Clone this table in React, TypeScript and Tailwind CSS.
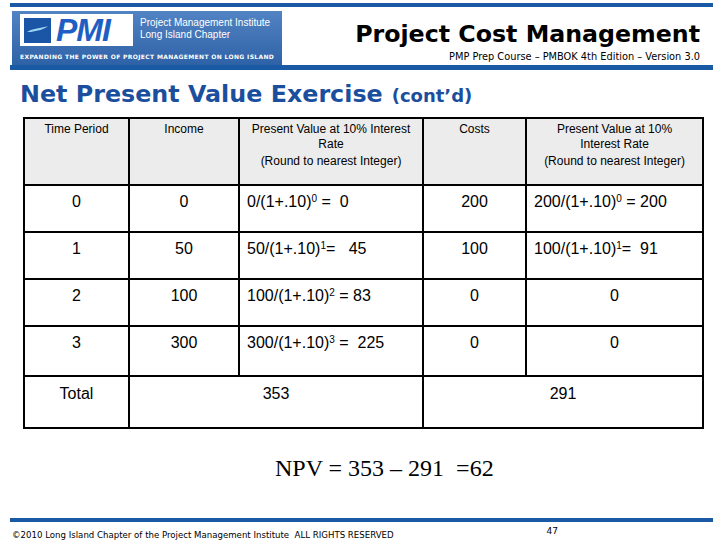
import React from 'react'

const headerCells = [
  { w: 'w-[105px]', lines: ['Time Period'] },
  { w: 'w-[110px]', lines: ['Income'] },
  { w: 'w-[184px]', lines: ['Present Value at 10% Interest', 'Rate', '(Round to nearest Integer)'] },
  { w: 'w-[103px]', lines: ['Costs'] },
  { w: 'w-[177px]', lines: ['Present Value at 10%', 'Interest Rate', '(Round to nearest Integer)'] },
]

function Pow({ base, exp, rest }: { base: string; exp: string; rest: string }) {
  return (
    <span className="whitespace-pre">
      {base}
      <sup className="text-[10px]">{exp}</sup>
      {rest}
    </span>
  )
}

const rows = [
  { t: '0', inc: '0', pv: <Pow base="0/(1+.10)" exp="0" rest=" =  0" />, cost: '200', pvc: <Pow base="200/(1+.10)" exp="0" rest=" = 200" />, h: 'h-[47px]' },
  { t: '1', inc: '50', pv: <Pow base="50/(1+.10)" exp="1" rest="=   45" />, cost: '100', pvc: <Pow base="100/(1+.10)" exp="1" rest="=  91" />, h: 'h-[47px]' },
  { t: '2', inc: '100', pv: <Pow base="100/(1+.10)" exp="2" rest=" = 83" />, cost: '0', pvc: '0', h: 'h-[47px]' },
  { t: '3', inc: '300', pv: <Pow base="300/(1+.10)" exp="3" rest=" =  225" />, cost: '0', pvc: '0', h: 'h-[50px]' },
]

function Logo() {
  return (
    <div className="flex h-[54px] w-[270px] flex-col overflow-hidden bg-gradient-to-b from-[#5283c3] to-[#2e62a7] pl-[8px] pt-[3px]">
      <div className="flex items-start gap-[7px]">
        <div className="flex h-[32px] w-[113px] shrink-0 items-center gap-[5px] bg-white px-[4px]">
          <div className="flex h-[25px] w-[27px] shrink-0 items-center justify-center bg-[#1b55a6]">
            <svg width="23" height="10" viewBox="0 0 24 10">
              <path d="M1 7 L5 5 L9 4 L14 3 L18 2 L23 1 L20 3 L15 5 L10 6 L5 7 Z" fill="#9fd6f0" />
            </svg>
          </div>
          <span className="text-[32px] font-black italic leading-none tracking-[-1px] text-[#1f5fc4] [font-family:'Liberation_Sans',Arial,sans-serif]">
            PMI
          </span>
        </div>
        <div className="whitespace-nowrap pt-[3px] text-[10px] leading-[12px] text-white [font-family:'Liberation_Sans',Arial,sans-serif]">
          <div>Project Management Institute</div>
          <div>Long Island Chapter</div>
        </div>
      </div>
      <div className="mt-[7px] whitespace-nowrap text-[6px] font-bold uppercase leading-[8px] tracking-[0.35px] text-white [font-family:'DejaVu_Sans',sans-serif]">
        Expanding the Power of Project Management on Long Island
      </div>
    </div>
  )
}

export default function App() {
  return (
    <div className="flex h-[540px] w-[720px] flex-col overflow-hidden bg-white [font-family:'Liberation_Sans',Arial,sans-serif]">
      <div className="ml-[10px] mt-[3px] h-[5px] w-[703px] bg-[#1a5aa5]" />
      <div className="ml-[10px] flex h-[61px] w-[703px] items-start justify-between">
        <div className="ml-[2px] mt-[4px]">
          <Logo />
        </div>
        <div className="mr-[13px] mt-[12px] flex flex-col items-end">
          <h1 className="text-[23.7px] font-bold leading-[30px] text-black [font-family:'DejaVu_Sans',sans-serif]">
            Project Cost Management
          </h1>
          <p className="mt-[3px] whitespace-nowrap text-[9.8px] leading-[10px] text-black [font-family:'DejaVu_Sans',sans-serif]">
            PMP Prep Course – PMBOK 4th Edition – Version 3.0
          </p>
        </div>
      </div>
      <div className="ml-[10px] h-[5px] w-[703px] bg-[#1a5aa5]" />

      <div className="ml-[20px] mt-[10px] flex items-baseline gap-[9px] text-[#1b4f9e] [font-family:'DejaVu_Sans',sans-serif]">
        <span className="text-[23.8px] font-bold leading-[28px]">Net Present Value Exercise</span>
        <span className="text-[18px] font-bold">(cont’d)</span>
      </div>

      <table className="ml-[23px] mt-[8px] w-[681px] border-collapse border-2 border-black text-black">
        <thead>
          <tr className="h-[67px] bg-[#ececec]">
            {headerCells.map((c, i) => (
              <th key={i} className={`${c.w} border-2 border-black px-[4px] pt-[3px] align-top text-[12px] font-normal leading-[15px]`}>
                {c.lines.map((l, j) => (
                  <div key={j} className={j === 2 ? 'mt-[2px]' : ''}>
                    {l}
                  </div>
                ))}
              </th>
            ))}
          </tr>
        </thead>
        <tbody className="text-[16px]">
          {rows.map((r) => (
            <tr key={r.t} className={r.h}>
              <td className="border-2 border-black pt-[4px] text-center align-top">{r.t}</td>
              <td className="border-2 border-black pt-[4px] text-center align-top">{r.inc}</td>
              <td className="border-2 border-black pl-[7px] pt-[4px] text-left align-top">{r.pv}</td>
              <td className="border-2 border-black pt-[4px] text-center align-top">{r.cost}</td>
              <td className={`border-2 border-black pt-[4px] align-top ${typeof r.pvc === 'string' ? 'text-center' : 'pl-[7px] text-left'}`}>
                {r.pvc}
              </td>
            </tr>
          ))}
          <tr className="h-[52px]">
            <td className="border-2 border-black pt-[5px] text-center align-top">Total</td>
            <td colSpan={2} className="border-2 border-black pt-[5px] text-center align-top">
              353
            </td>
            <td colSpan={2} className="border-2 border-black pt-[5px] text-center align-top">
              291
            </td>
          </tr>
        </tbody>
      </table>

      <div className="ml-[275px] mt-[25px] whitespace-pre text-[24px] leading-[28px] text-black [font-family:'Liberation_Serif',serif]">
        NPV = 353 – 291  =62
      </div>

      <div className="ml-[10px] mt-[36px] h-[5px] w-[703px] bg-[#1a5aa5]" />
      <div className="ml-[12px] mt-[4px] flex w-[546px] items-start justify-between text-[8.6px] leading-[10px] text-black [font-family:'DejaVu_Sans',sans-serif]">
        <span className="mt-[4px] whitespace-pre">©2010 Long Island Chapter of the Project Management Institute  ALL RIGHTS RESERVED</span>
        <span className="text-[9px]">47</span>
      </div>
    </div>
  )
}
